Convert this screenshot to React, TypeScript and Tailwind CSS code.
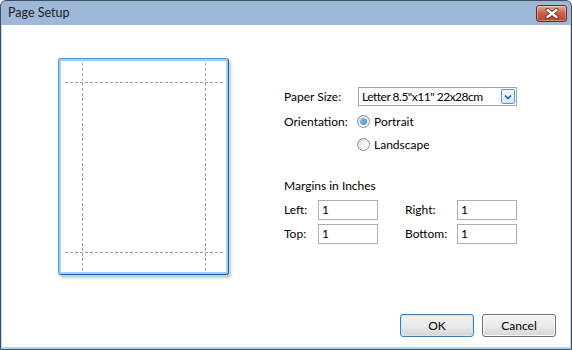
import React from "react";

const font = { fontFamily: 'Lato, "Noto Sans", sans-serif' };

function Radio({ checked }: { checked?: boolean }) {
  return (
    <span className="relative inline-flex h-[13px] w-[13px] items-center justify-center rounded-full border border-[#8e8f8f] bg-gradient-to-br from-[#d6d6d6] via-[#f2f2f2] to-[#ffffff]">
      {checked && (
        <span className="h-[7px] w-[7px] rounded-full bg-gradient-to-br from-[#8cc4f0] to-[#3f8fdc]" />
      )}
    </span>
  );
}

function Field({ value }: { value: string }) {
  return (
    <div className="flex h-[20px] w-[60px] items-center border border-[#abadb3] bg-white pl-[3px] text-[12px] text-black">
      {value}
    </div>
  );
}

export default function App() {
  return (
    <div
      className="flex h-[350px] w-[572px] flex-col overflow-hidden rounded-t-[6px] border border-[#3d4f63] bg-gradient-to-b from-[#9cb7d7] to-[#bcd2ea]"
      style={font}
    >
      {/* Title bar */}
      <div className="flex h-[24px] shrink-0 items-center pl-[7px] pr-[4px]">
        <span className="text-[12.5px] text-[#1b1b1b]">Page Setup</span>
        <div className="ml-auto mt-[1px] flex h-[17px] w-[31px] items-center justify-center rounded-[3px] border border-[#6e2a20] bg-gradient-to-b from-[#e5a597] via-[#c9604b] to-[#b8442f] shadow-[inset_0_0_0_1px_rgba(255,255,255,0.35)]">
          <svg width="14" height="11" viewBox="0 0 14 11">
            <path d="M2.5 2 L11.5 9 M11.5 2 L2.5 9" stroke="#5a2a22" strokeWidth="4" strokeLinecap="round" />
            <path d="M2.5 2 L11.5 9 M11.5 2 L2.5 9" stroke="#ffffff" strokeWidth="2.4" strokeLinecap="round" />
          </svg>
        </div>
      </div>

      {/* Client area with frame */}
      <div className="flex flex-1 flex-col border-x border-b-2 border-x-[#c0d6ec] border-b-[#a8d6ea] bg-white">
        <div className="flex items-start pl-[56px] pt-[33px]">
          {/* Page preview */}
          <div className="relative h-[217px] w-[171px] rounded-[3px] border border-t-[#4f9ae0] border-l-[#4f9ae0] border-r-[#1a60ad] border-b-[#1a60ad] bg-white shadow-[inset_0_0_0_2px_#9fd0f7,2px_3px_3px_rgba(0,0,0,0.22)]">
            <svg className="absolute left-0 top-0" width="171" height="217">
              <g stroke="#a3a3a3" strokeWidth="1" strokeDasharray="3 2">
                <line x1="6" y1="23.5" x2="166" y2="23.5" />
                <line x1="6" y1="193.5" x2="166" y2="193.5" />
                <line x1="23.5" y1="4" x2="23.5" y2="212" />
                <line x1="146.5" y1="4" x2="146.5" y2="212" />
              </g>
            </svg>
          </div>

          {/* Form */}
          <div className="ml-[55px] mt-[29px] flex flex-col text-[12px] text-black">
            <div className="flex h-[19px] items-center">
              <span className="w-[74px]">Paper Size:</span>
              <div className="flex h-[19px] w-[159px] items-center border border-[#a5a5a5] bg-white pl-[3px] pr-[1px]">
                <span className="flex-1 tracking-[-0.5px]">Letter 8.5&quot;x11&quot; 22x28cm</span>
                <span className="flex h-[15px] w-[14px] items-center justify-center rounded-[2px] border border-[#5f95cf] bg-gradient-to-b from-[#f2f8fd] to-[#d3e6f8]">
                  <svg width="8" height="6" viewBox="0 0 8 6">
                    <path d="M1 1.5 L4 4.5 L7 1.5" fill="none" stroke="#1f4f8a" strokeWidth="1.5" />
                  </svg>
                </span>
              </div>
            </div>
            <div className="mt-[4px] flex h-[23px] items-center">
              <span className="w-[73px]">Orientation:</span>
              <Radio checked />
              <span className="ml-[4px]">Portrait</span>
            </div>
            <div className="flex h-[23px] items-center">
              <span className="w-[73px]" />
              <Radio />
              <span className="ml-[4px]">Landscape</span>
            </div>

            <div className="mt-[20px] flex h-[20px] items-center">Margins in Inches</div>
            <div className="mt-[4px] flex items-center">
              <span className="w-[34px]">Left:</span>
              <Field value="1" />
              <span className="ml-[27px] w-[52px]">Right:</span>
              <Field value="1" />
            </div>
            <div className="mt-[4px] flex items-center">
              <span className="w-[34px]">Top:</span>
              <Field value="1" />
              <span className="ml-[27px] w-[52px]">Bottom:</span>
              <Field value="1" />
            </div>
          </div>
        </div>

        <div className="flex-1" />

        <div className="flex justify-end gap-[8px] pb-[10px] pr-[14px]">
          <button className="flex h-[23px] w-[74px] items-center justify-center rounded-[3px] border border-[#3c7fb1] bg-gradient-to-b from-[#f2f2f2] via-[#ebebeb] to-[#d6d6d6] text-[12px] text-black shadow-[inset_0_0_0_1px_#c8e8fb]">
            OK
          </button>
          <button className="flex h-[23px] w-[74px] items-center justify-center rounded-[3px] border border-[#707070] bg-gradient-to-b from-[#f2f2f2] via-[#ebebeb] to-[#d6d6d6] text-[12px] text-black shadow-[inset_0_0_0_1px_#fcfcfc]">
            Cancel
          </button>
        </div>
      </div>
    </div>
  );
}
